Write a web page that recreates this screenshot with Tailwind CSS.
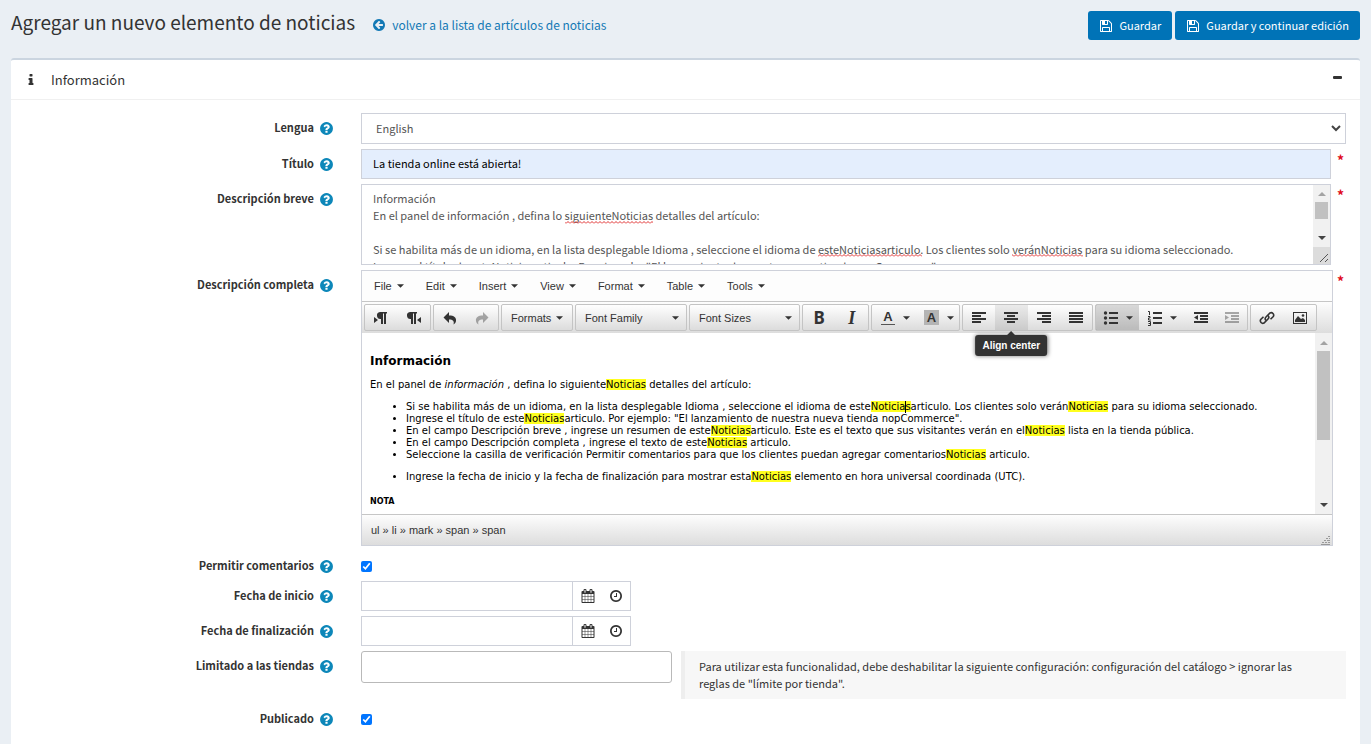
<!DOCTYPE html>
<html lang="es">
<head>
<meta charset="utf-8">
<title>Agregar un nuevo elemento de noticias</title>
<script src="https://cdn.jsdelivr.net/npm/@tailwindcss/browser@4"></script>
</head>
<body class="min-h-screen overflow-hidden bg-[#eaeff4] font-['Noto_Sans_CJK_SC',sans-serif] text-[11px] leading-[17px] text-[#333]">
<svg class="hidden" aria-hidden="true">
  <symbol id="help" viewBox="0 0 1792 1792"><path d="M1024 1376v-192q0-14-9-23t-23-9h-192q-14 0-23 9t-9 23v192q0 14 9 23t23 9h192q14 0 23-9t9-23zm256-672q0-88-55.500-163t-138.500-116-170-41q-243 0-371 213-15 24 8 42l132 100q7 6 19 6 16 0 25-12 53-68 86-92 34-24 86-24 48 0 85.500 26t37.500 59q0 38-20 61t-68 45q-63 28-115.500 86.500t-52.500 125.500v36q0 14 9 23t23 9h192q14 0 23-9t9-23q0-19 21.500-49.500t54.500-49.500q32-18 49-28.500t46-35 44.500-48 28-60.500 12.500-81zm384 192q0 209-103 385.500t-279.500 279.500-385.500 103-385.500-103-279.500-279.500-103-385.500 103-385.500 279.500-279.500 385.500-103 385.500 103 279.500 279.500 103 385.500z"/></symbol>
  <symbol id="floppy" viewBox="0 0 1792 1792"><path d="M512 1536h768v-384h-768v384zm896 0h128v-896q0-14-10-38.500t-20-34.500l-281-281q-10-10-34-20t-39-10v416q0 40-28 68t-68 28h-576q-40 0-68-28t-28-68v-416h-128v1280h128v-416q0-40 28-68t68-28h832q40 0 68 28t28 68v416zm-384-928v-320q0-13-9.500-22.500t-22.500-9.500h-192q-13 0-22.500 9.500t-9.500 22.500v320q0 13 9.500 22.500t22.500 9.500h192q13 0 22.500-9.500t9.500-22.500zm640 32v928q0 40-28 68t-68 28h-1344q-40 0-68-28t-28-68v-1344q0-40 28-68t68-28h928q40 0 88 20t76 48l280 280q28 28 48 76t20 88z"/></symbol>
  <symbol id="clock" viewBox="0 0 1792 1792"><path d="M1024 544v448q0 14-9 23t-23 9h-320q-14 0-23-9t-9-23v-64q0-14 9-23t23-9h224v-352q0-14 9-23t23-9h64q14 0 23 9t9 23zm416 352q0-148-73-273t-198-198-273-73-273 73-198 198-73 273 73 273 198 198 273 73 273-73 198-198 73-273zm224 0q0 209-103 385.500t-279.500 279.500-385.500 103-385.500-103-279.500-279.500-103-385.500 103-385.500 279.500-279.500 385.500-103 385.500 103 279.500 279.500 103 385.500z"/></symbol>
  <symbol id="calendar" viewBox="0 0 1792 1792"><path d="M192 1664h288v-288h-288v288zm352 0h320v-288h-320v288zm-352-352h288v-320h-288v320zm352 0h320v-320h-320v320zm-352-384h288v-288h-288v288zm736 736h320v-288h-320v288zm-384-736h320v-288h-320v288zm768 736h288v-288h-288v288zm-384-352h320v-320h-320v320zm-352-864v-288q0-13-9.500-22.500t-22.500-9.500h-64q-13 0-22.500 9.500t-9.500 22.500v288q0 13 9.500 22.500t22.500 9.500h64q13 0 22.500-9.500t9.500-22.500zm736 864h288v-320h-288v320zm-384-384h320v-288h-320v288zm384 0h288v-288h-288v288zm32-480v-288q0-13-9.500-22.500t-22.500-9.500h-64q-13 0-22.500 9.500t-9.500 22.500v288q0 13 9.500 22.500t22.500 9.500h64q13 0 22.500-9.500t9.500-22.500zm384-64v1280q0 52-38 90t-90 38h-1408q-52 0-90-38t-38-90v-1280q0-52 38-90t90-38h128v-96q0-66 47-113t113-47h64q66 0 113 47t47 113v96h384v-96q0-66 47-113t113-47h64q66 0 113 47t47 113v96h128q52 0 90 38t38 90z"/></symbol>
  <symbol id="back" viewBox="0 0 1792 1792"><path d="M1408 960v-128q0-26-19-45t-45-19h-502l189-189q19-19 19-45t-19-45l-91-91q-18-18-45-18t-45 18l-362 362-91 91q-18 18-18 45t18 45l91 91 362 362q18 18 45 18t45-18l91-91q18-18 18-45t-18-45l-189-189h502q26 0 45-19t19-45zm256-64q0 209-103 385.500t-279.500 279.500-385.500 103-385.500-103-279.500-279.500-103-385.500 103-385.500 279.500-279.500 385.500-103 385.500 103 279.500 279.500 103 385.500z"/></symbol>
  <symbol id="info" viewBox="0 0 1792 1792"><path d="M1216 1344v128q0 26-19 45t-45 19h-512q-26 0-45-19t-19-45v-128q0-26 19-45t45-19h64v-384h-64q-26 0-45-19t-19-45v-128q0-26 19-45t45-19h384q26 0 45 19t19 45v576h64q26 0 45 19t19 45zm-128-1152v192q0 26-19 45t-45 19h-256q-26 0-45-19t-19-45v-192q0-26 19-45t45-19h256q26 0 45 19t19 45z"/></symbol>
  <symbol id="caret" viewBox="0 0 8 4"><path d="M0 0h8L4 4z"/></symbol>
  <symbol id="ltr" viewBox="0 0 16 16"><path d="M7 2h7v1.500h-1V14h-2V3.500h-1V14H8V9a3.500 3.500 0 0 1-1-7zM1 7l4 3-4 3z"/></symbol>
  <symbol id="rtl" viewBox="0 0 16 16"><path d="M4 2h7v1.500h-1V14H8V3.500H7V14H5V9a3.500 3.500 0 0 1-1-7zM15 7l-4 3 4 3z"/></symbol>
  <symbol id="undo" viewBox="0 0 16 16"><path d="M7 2v3.500c5 0 7.500 2 7 5.500-.2 1.500-1 2.800-2.500 3.500C12.500 11 11 9.500 7 9.500V13L1.500 7.500z"/></symbol>
  <symbol id="left" viewBox="0 0 16 16"><path d="M1 2h14v2H1zM1 5h9v2H1zM1 8h14v2H1zM1 11h9v2H1z"/></symbol>
  <symbol id="center" viewBox="0 0 16 16"><path d="M1 2h14v2H1zM4 5h8v2H4zM1 8h14v2H1zM4 11h8v2H4z"/></symbol>
  <symbol id="right" viewBox="0 0 16 16"><path d="M1 2h14v2H1zM6 5h9v2H6zM1 8h14v2H1zM6 11h9v2H6z"/></symbol>
  <symbol id="justify" viewBox="0 0 16 16"><path d="M1 2h14v2H1zM1 5h14v2H1zM1 8h14v2H1zM1 11h14v2H1z"/></symbol>
  <symbol id="bullets" viewBox="0 0 16 16"><path d="M6 2h9v2H6zM6 7h9v2H6zM6 12h9v2H6z"/><circle cx="2.500" cy="3" r="1.700"/><circle cx="2.500" cy="8" r="1.700"/><circle cx="2.500" cy="13" r="1.700"/></symbol>
  <symbol id="numbers" viewBox="0 0 16 16"><path d="M6 2h9v2H6zM6 7h9v2H6zM6 12h9v2H6z"/><path d="M1 1.500h1.500V5M1 6.500h2v1.500H1.500v2H4M1 11.500h2.500v4H1M1.500 13.500h2" fill="none" stroke="currentColor"/></symbol>
  <symbol id="outdent" viewBox="0 0 16 16"><path d="M1 2h14v2H1zM7 5h8v2H7zM7 8h8v2H7zM1 11h14v2H1zM5 5v5L1 7.500z"/></symbol>
  <symbol id="indent" viewBox="0 0 16 16"><path d="M1 2h14v2H1zM7 5h8v2H7zM7 8h8v2H7zM1 11h14v2H1zM1 5v5l4-2.500z"/></symbol>
  <symbol id="link" viewBox="0 0 16 16"><g fill="none" stroke="currentColor" stroke-width="1.600"><path d="M7 10.500a2.500 2.500 0 0 1 0-3.500l4-4a2.500 2.500 0 0 1 3.300 3.500L11.500 9.300"/><path d="M9 5.500A2.500 2.500 0 0 1 9 9l-4 4a2.500 2.500 0 0 1-3.300-3.500L4.500 6.700"/></g></symbol>
  <symbol id="image" viewBox="0 0 16 16"><path d="M1 2h14v12H1zM2 3v10h12V3z" fill-rule="evenodd"/><path d="M3 12V10l3-4 3 3 2-1 2 2v2z"/><circle cx="11" cy="5.500" r="1.300"/></symbol>
</svg>

<header class="flex items-start px-[11px] pt-[11px]">
  <h1 class="h-[24px] text-[19px] leading-[22px] text-[#333]">Agregar un nuevo elemento de noticias</h1>
  <a href="#" class="ml-[17px] mt-[5px] flex items-center gap-[6px] text-[12px] text-[#1379b5]"><svg class="size-[14px] fill-current"><use href="#back"/></svg>volver a la lista de artículos de noticias</a>
  <div class="ml-auto flex gap-[3px]">
    <button type="button" class="flex h-[29px] items-center gap-[6px] rounded-[3px] bg-[#0073b7] px-[11px] text-white"><svg class="size-[14px] fill-current"><use href="#floppy"/></svg>Guardar</button>
    <button type="button" class="flex h-[29px] items-center gap-[6px] rounded-[3px] bg-[#0073b7] px-[11px] text-white"><svg class="size-[14px] fill-current"><use href="#floppy"/></svg>Guardar y continuar edición</button>
  </div>
</header>

<main class="mx-[11px] mt-[18px] min-h-[700px] rounded-t-[3px] border-t-2 border-[#cbd5e0] bg-white">
  <div class="flex h-[40px] items-center border-b border-[#f0f0f0] pl-[13px] pr-[18px]">
    <svg class="size-[14px] fill-[#333]"><use href="#info"/></svg>
    <h2 class="ml-[13px] text-[13px]">Información</h2>
    <button type="button" aria-label="Contraer" class="ml-auto h-[16px] pb-1"><svg class="h-[3px] w-[9px]"><rect width="9" height="3" rx="1" fill="#333"/></svg></button>
  </div>

  <form class="px-[14px] pt-[13px]">
    <div class="mb-[5px] grid grid-cols-[309px_minmax(0,1fr)] gap-x-[27px]">
      <label for="lang" class="flex h-[30px] items-center justify-end gap-[5px] pb-[2px] font-bold">Lengua<svg class="mt-[2px] size-[15px] fill-[#0d87b9]"><use href="#help"/></svg></label>
      <div class="relative">
        <select id="lang" class="block h-[31px] w-full appearance-none border border-[#ced1da] bg-white px-[14px] text-[#555]"><option>English</option></select>
        <svg class="pointer-events-none absolute right-[5px] top-[12px] h-[7px] w-[10px]" viewBox="0 0 10 7"><path d="M1 1l4 4 4-4" fill="none" stroke="#444" stroke-width="2"/></svg>
      </div>
    </div>

    <div class="mb-[5px] grid grid-cols-[309px_minmax(0,1fr)] gap-x-[27px]">
      <label for="title" class="flex h-[30px] items-center justify-end gap-[5px] pb-[2px] font-bold">Título<svg class="mt-[2px] size-[15px] fill-[#0d87b9]"><use href="#help"/></svg></label>
      <div class="flex">
        <input id="title" type="text" value="La tienda online está abierta!" class="h-[30px] min-w-0 flex-1 border border-[#ced1da] bg-[#e4eefd] px-[11px] pb-[2px] text-black">
        <span class="w-[15px] pl-[6px] pt-[3px] text-[14px] font-bold text-[#e00b1c]">*</span>
      </div>
    </div>

    <div class="mb-[5px] grid grid-cols-[309px_minmax(0,1fr)] gap-x-[27px]">
      <label for="short" class="flex h-[30px] items-center justify-end gap-[5px] pb-[2px] font-bold">Descripción breve<svg class="mt-[2px] size-[15px] fill-[#0d87b9]"><use href="#help"/></svg></label>
      <div class="flex">
        <div class="relative flex h-[81px] min-w-0 flex-1 border border-[#ced1da]">
          <textarea id="short" spellcheck="false" class="block h-full min-w-0 flex-1 resize-none overflow-hidden pl-[11px] pt-[5px] text-[#555]">Información
En el panel de información , defina lo siguienteNoticias detalles del artículo:

Si se habilita más de un idioma, en la lista desplegable Idioma , seleccione el idioma de esteNoticiasarticulo. Los clientes solo veránNoticias para su idioma seleccionado.
Ingrese el título de esteNoticiasarticulo. Por ejemplo: "El lanzamiento de nuestra nueva tienda nopCommerce".</textarea>
          <svg class="pointer-events-none absolute inset-0 size-full" aria-hidden="true">
            <defs><pattern id="wave" width="4" height="3" patternUnits="userSpaceOnUse"><path d="M0 2.500L2 .5 4 2.500" fill="none" stroke="#e03030"/></pattern></defs>
            <rect x="203" y="36" width="88" height="3" fill="url(#wave)"/>
            <rect x="456" y="69" width="104" height="3" fill="url(#wave)"/>
            <rect x="650" y="69" width="71" height="3" fill="url(#wave)"/>
          </svg>
          <div class="relative flex w-[17px] flex-col items-center bg-[#f1f1f1]">
            <svg class="mt-[7px] h-1 w-2 rotate-180 fill-[#a3a3a3]"><use href="#caret"/></svg>
            <div class="mt-[6px] h-[17px] w-[13px] bg-[#c1c1c1]"></div>
            <svg class="mt-[17px] h-1 w-2 fill-[#444]"><use href="#caret"/></svg>
            <svg class="mt-auto h-[17px] w-[17px] bg-[#dcdcdc]"><path d="M7 15l8-8M12 15l3-3" stroke="#555"/></svg>
          </div>
        </div>
        <span class="w-[15px] pl-[6px] pt-[3px] text-[14px] font-bold text-[#e00b1c]">*</span>
      </div>
    </div>

    <div class="mb-[5px] grid grid-cols-[309px_minmax(0,1fr)] gap-x-[27px]">
      <div id="full" class="flex h-[30px] items-center justify-end gap-[5px] pb-[2px] font-bold">Descripción completa<svg class="mt-[2px] size-[15px] fill-[#0d87b9]"><use href="#help"/></svg></div>
      <div class="flex">
        <div class="h-[276px] min-w-0 flex-1 border border-[#ced1da] font-['Liberation_Sans',sans-serif] text-[11px] leading-[14px]">
          <div class="flex h-[31px] items-center gap-[22px] border-b border-[#c6c6c6] bg-[#fdfdfd] pl-3">
            <button type="button" class="flex items-center gap-[5px]">File<svg class="h-1 w-[7px] fill-[#333]"><use href="#caret"/></svg></button>
            <button type="button" class="flex items-center gap-[5px]">Edit<svg class="h-1 w-[7px] fill-[#333]"><use href="#caret"/></svg></button>
            <button type="button" class="flex items-center gap-[5px]">Insert<svg class="h-1 w-[7px] fill-[#333]"><use href="#caret"/></svg></button>
            <button type="button" class="flex items-center gap-[5px]">View<svg class="h-1 w-[7px] fill-[#333]"><use href="#caret"/></svg></button>
            <button type="button" class="flex items-center gap-[5px]">Format<svg class="h-1 w-[7px] fill-[#333]"><use href="#caret"/></svg></button>
            <button type="button" class="flex items-center gap-[5px]">Table<svg class="h-1 w-[7px] fill-[#333]"><use href="#caret"/></svg></button>
            <button type="button" class="flex items-center gap-[5px]">Tools<svg class="h-1 w-[7px] fill-[#333]"><use href="#caret"/></svg></button>
          </div>
          <div class="flex h-[31px] items-center gap-[2px] bg-linear-to-b from-[#fdfdfd] to-[#dddddd] pl-[2px] text-[#333]">
            <div class="flex h-[27px] w-[67px] rounded-[2px] border border-[#c4c4c4] bg-linear-to-b from-white to-[#dcdcdc]">
              <button type="button" aria-label="Left to right" class="grid flex-1 place-items-center"><svg class="size-4 fill-current"><use href="#ltr"/></svg></button>
              <button type="button" aria-label="Right to left" class="grid flex-1 place-items-center"><svg class="size-4 fill-current"><use href="#rtl"/></svg></button>
            </div>
            <div class="flex h-[27px] w-[66px] rounded-[2px] border border-[#c4c4c4] bg-linear-to-b from-white to-[#dcdcdc]">
              <button type="button" aria-label="Undo" class="grid flex-1 place-items-center"><svg class="size-4 fill-current"><use href="#undo"/></svg></button>
              <button type="button" aria-label="Redo" class="grid flex-1 place-items-center opacity-40"><svg class="size-4 -scale-x-100 fill-current"><use href="#undo"/></svg></button>
            </div>
            <button type="button" class="flex h-[27px] w-[72px] items-center justify-between rounded-[2px] border border-[#c4c4c4] bg-linear-to-b from-white to-[#dcdcdc] px-[9px]">Formats<svg class="h-1 w-[7px] fill-current"><use href="#caret"/></svg></button>
            <button type="button" class="flex h-[27px] w-[112px] items-center justify-between rounded-[2px] border border-[#c4c4c4] bg-linear-to-b from-white to-[#dcdcdc] pl-[9px] pr-[7px]">Font Family<svg class="h-1 w-[7px] fill-current"><use href="#caret"/></svg></button>
            <button type="button" class="flex h-[27px] w-[111px] items-center justify-between rounded-[2px] border border-[#c4c4c4] bg-linear-to-b from-white to-[#dcdcdc] pl-[9px] pr-[7px]">Font Sizes<svg class="h-1 w-[7px] fill-current"><use href="#caret"/></svg></button>
            <div class="flex h-[27px] w-[67px] rounded-[2px] border border-[#c4c4c4] bg-linear-to-b from-white to-[#dcdcdc] text-[17px]">
              <button type="button" class="flex-1 font-['Noto_Sans',sans-serif] font-bold">B</button>
              <button type="button" class="flex-1 font-['Liberation_Serif',serif] text-[18px] font-bold italic">I</button>
            </div>
            <div class="flex h-[27px] w-[89px] items-center rounded-[2px] border border-[#c4c4c4] bg-linear-to-b from-white to-[#dcdcdc] text-[13px] font-bold">
              <button type="button" class="ml-[9px] h-[15px] w-[14px] border-b border-[#555] leading-[14px]">A</button>
              <button type="button" aria-label="Text color" class="ml-2"><svg class="h-1 w-[7px] fill-current"><use href="#caret"/></svg></button>
              <button type="button" class="ml-[14px] h-[15px] w-[15px] bg-[#b4b4b4] leading-[14px]">A</button>
              <button type="button" aria-label="Background color" class="ml-2"><svg class="h-1 w-[7px] fill-current"><use href="#caret"/></svg></button>
            </div>
            <div class="flex h-[27px] w-[131px] rounded-[2px] border border-[#c4c4c4] bg-linear-to-b from-white to-[#dcdcdc]">
              <button type="button" aria-label="Align left" class="grid flex-1 place-items-center"><svg class="size-4 fill-current"><use href="#left"/></svg></button>
              <button type="button" aria-describedby="tip" aria-label="Align center" class="relative grid flex-1 place-items-center bg-black/8"><svg class="size-4 fill-current"><use href="#center"/></svg>
                <span id="tip" role="tooltip" class="absolute left-1/2 top-[30px] z-10 -translate-x-1/2 whitespace-nowrap rounded-[3px] bg-[#333] px-[7px] py-[4px] text-[10px] leading-[13px] font-bold text-white shadow-[0_0_4px_#777]"><svg class="absolute -top-1 left-1/2 h-1 w-2 -translate-x-1/2 rotate-180 fill-[#333]"><use href="#caret"/></svg>Align center</span>
              </button>
              <button type="button" aria-label="Align right" class="grid flex-1 place-items-center"><svg class="size-4 fill-current"><use href="#right"/></svg></button>
              <button type="button" aria-label="Justify" class="grid flex-1 place-items-center"><svg class="size-4 fill-current"><use href="#justify"/></svg></button>
            </div>
            <div class="flex h-[27px] w-[153px] rounded-[2px] border border-[#c4c4c4] bg-linear-to-b from-white to-[#dcdcdc]">
              <button type="button" aria-label="Bullet list" class="flex w-[43px] items-center justify-center gap-[7px] bg-black/15"><svg class="size-4 fill-current"><use href="#bullets"/></svg><svg class="h-1 w-[7px] fill-current"><use href="#caret"/></svg></button>
              <button type="button" aria-label="Numbered list" class="flex w-[46px] items-center justify-center gap-[7px]"><svg class="size-4 fill-current"><use href="#numbers"/></svg><svg class="h-1 w-[7px] fill-current"><use href="#caret"/></svg></button>
              <button type="button" aria-label="Outdent" class="grid flex-1 place-items-center"><svg class="size-4 fill-current"><use href="#outdent"/></svg></button>
              <button type="button" aria-label="Indent" class="grid flex-1 place-items-center opacity-40"><svg class="size-4 fill-current"><use href="#indent"/></svg></button>
            </div>
            <div class="flex h-[27px] w-[67px] rounded-[2px] border border-[#c4c4c4] bg-linear-to-b from-white to-[#dcdcdc]">
              <button type="button" aria-label="Link" class="grid flex-1 place-items-center"><svg class="size-4 fill-current"><use href="#link"/></svg></button>
              <button type="button" aria-label="Image" class="grid flex-1 place-items-center"><svg class="size-4 fill-current"><use href="#image"/></svg></button>
            </div>
          </div>
          <div class="flex h-[181px]">
            <div contenteditable="true" spellcheck="false" role="textbox" aria-multiline="true" aria-labelledby="full" class="min-w-0 flex-1 overflow-hidden pl-2 pt-5 font-['DejaVu_Sans',sans-serif] text-[10px] leading-[12px] text-black">
              <h3 class="text-[12px] font-bold leading-[16px]">Información</h3>
              <p class="mt-[10px]">En el panel de <em>información</em> , defina lo siguiente<mark class="bg-[#ffff1f]">Noticias</mark> detalles del artículo:</p>
              <ul class="mt-[10px] list-disc pl-9">
                <li>Si se habilita más de un idioma, en la lista desplegable Idioma , seleccione el idioma de este<mark class="relative bg-[#ffff1f]">Noticias<span class="absolute right-[5px] top-0 h-3 w-px bg-black"></span></mark>articulo. Los clientes solo verán<mark class="bg-[#ffff1f]">Noticias</mark> para su idioma seleccionado.</li>
                <li>Ingrese el título de este<mark class="bg-[#ffff1f]">Noticias</mark>articulo. Por ejemplo: "El lanzamiento de nuestra nueva tienda nopCommerce".</li>
                <li>En el campo Descripción breve , ingrese un resumen de este<mark class="bg-[#ffff1f]">Noticias</mark>articulo. Este es el texto que sus visitantes verán en el<mark class="bg-[#ffff1f]">Noticias</mark> lista en la tienda pública.</li>
                <li>En el campo Descripción completa , ingrese el texto de este<mark class="bg-[#ffff1f]">Noticias</mark> articulo.</li>
                <li>Seleccione la casilla de verificación Permitir comentarios para que los clientes puedan agregar comentarios<mark class="bg-[#ffff1f]">Noticias</mark> articulo.</li>
              </ul>
              <ul class="mt-[10px] list-disc pl-9">
                <li>Ingrese la fecha de inicio y la fecha de finalización para mostrar esta<mark class="bg-[#ffff1f]">Noticias</mark> elemento en hora universal coordinada (UTC).</li>
              </ul>
              <h6 class="mt-[13px] text-[8px] font-bold">NOTA</h6>
            </div>
            <div class="flex w-[17px] flex-col items-center bg-[#f1f1f1]">
              <svg class="mt-2 h-1 w-2 rotate-180 fill-[#a3a3a3]"><use href="#caret"/></svg>
              <div class="mt-[6px] h-[89px] w-[13px] bg-[#c1c1c1]"></div>
              <svg class="mb-[7px] mt-auto h-1 w-2 fill-[#444]"><use href="#caret"/></svg>
            </div>
          </div>
          <div class="flex h-[31px] items-center justify-between border-t border-[#c6c6c6] bg-linear-to-b from-[#fdfdfd] to-[#dddddd] pl-[9px]">
            <span>ul » li » mark » span » span</span>
            <svg class="mr-[2px] h-[9px] w-[9px] self-end fill-[#999]" viewBox="0 0 9 9"><path d="M7 0h2v1H7zM5 2h2v1H5zM8 2h1v1H8zM3 4h2v1H3zM6 4h3v1H6zM1 6h2v1H1zM4 6h2v1H4zM7 6h2v1H7zM0 8h9v1H0z"/></svg>
          </div>
        </div>
        <span class="w-[13px] pl-1 pt-[3px] text-[14px] font-bold text-[#e00b1c]">*</span>
      </div>
    </div>

    <div class="grid grid-cols-[309px_minmax(0,1fr)] gap-x-[27px]">
      <label for="comments" class="flex h-[30px] items-center justify-end gap-[5px] pb-[2px] font-bold">Permitir comentarios<svg class="mt-[2px] size-[15px] fill-[#0d87b9]"><use href="#help"/></svg></label>
      <div class="flex h-[30px] items-center"><input id="comments" type="checkbox" checked class="size-[11px]"></div>
    </div>

    <div class="mb-[5px] grid grid-cols-[309px_minmax(0,1fr)] gap-x-[27px]">
      <label for="start" class="flex h-[30px] items-center justify-end gap-[5px] pb-[2px] font-bold">Fecha de inicio<svg class="mt-[2px] size-[15px] fill-[#0d87b9]"><use href="#help"/></svg></label>
      <div class="flex h-[30px] w-[270px] border border-[#ced1da]">
        <input id="start" type="text" class="min-w-0 flex-1 px-[11px]">
        <div class="flex w-[58px] items-center justify-center gap-[14px] border-l border-[#ced1da]">
          <button type="button" aria-label="Calendario"><svg class="block size-[14px] fill-[#333]"><use href="#calendar"/></svg></button>
          <button type="button" aria-label="Hora"><svg class="block size-[14px] fill-[#333]"><use href="#clock"/></svg></button>
        </div>
      </div>
    </div>

    <div class="mb-[5px] grid grid-cols-[309px_minmax(0,1fr)] gap-x-[27px]">
      <label for="end" class="flex h-[30px] items-center justify-end gap-[5px] pb-[2px] font-bold">Fecha de finalización<svg class="mt-[2px] size-[15px] fill-[#0d87b9]"><use href="#help"/></svg></label>
      <div class="flex h-[30px] w-[270px] border border-[#ced1da]">
        <input id="end" type="text" class="min-w-0 flex-1 px-[11px]">
        <div class="flex w-[58px] items-center justify-center gap-[14px] border-l border-[#ced1da]">
          <button type="button" aria-label="Calendario"><svg class="block size-[14px] fill-[#333]"><use href="#calendar"/></svg></button>
          <button type="button" aria-label="Hora"><svg class="block size-[14px] fill-[#333]"><use href="#clock"/></svg></button>
        </div>
      </div>
    </div>

    <div class="mb-[5px] grid grid-cols-[309px_minmax(0,1fr)] gap-x-[27px]">
      <label for="stores" class="flex h-[30px] items-center justify-end gap-[5px] pb-[2px] font-bold">Limitado a las tiendas<svg class="mt-[2px] size-[15px] fill-[#0d87b9]"><use href="#help"/></svg></label>
      <div class="flex items-start gap-[9px]">
        <input id="stores" type="text" class="h-[32px] w-[311px] rounded-[3px] border border-[#b9b9b9] px-[11px]">
        <p class="min-w-0 flex-1 border-l-4 border-[#eee] bg-[#f7f7f7] py-[7px] pl-[14px] pr-[30px]">Para utilizar esta funcionalidad, debe deshabilitar la siguiente configuración: configuración del catálogo &gt; ignorar las reglas de "límite por tienda".</p>
      </div>
    </div>

    <div class="grid grid-cols-[309px_minmax(0,1fr)] gap-x-[27px]">
      <label for="published" class="flex h-[30px] items-center justify-end gap-[5px] pb-[2px] font-bold">Publicado<svg class="mt-[2px] size-[15px] fill-[#0d87b9]"><use href="#help"/></svg></label>
      <div class="flex h-[30px] items-center"><input id="published" type="checkbox" checked class="size-[11px]"></div>
    </div>
  </form>
</main>
</body>
</html>
